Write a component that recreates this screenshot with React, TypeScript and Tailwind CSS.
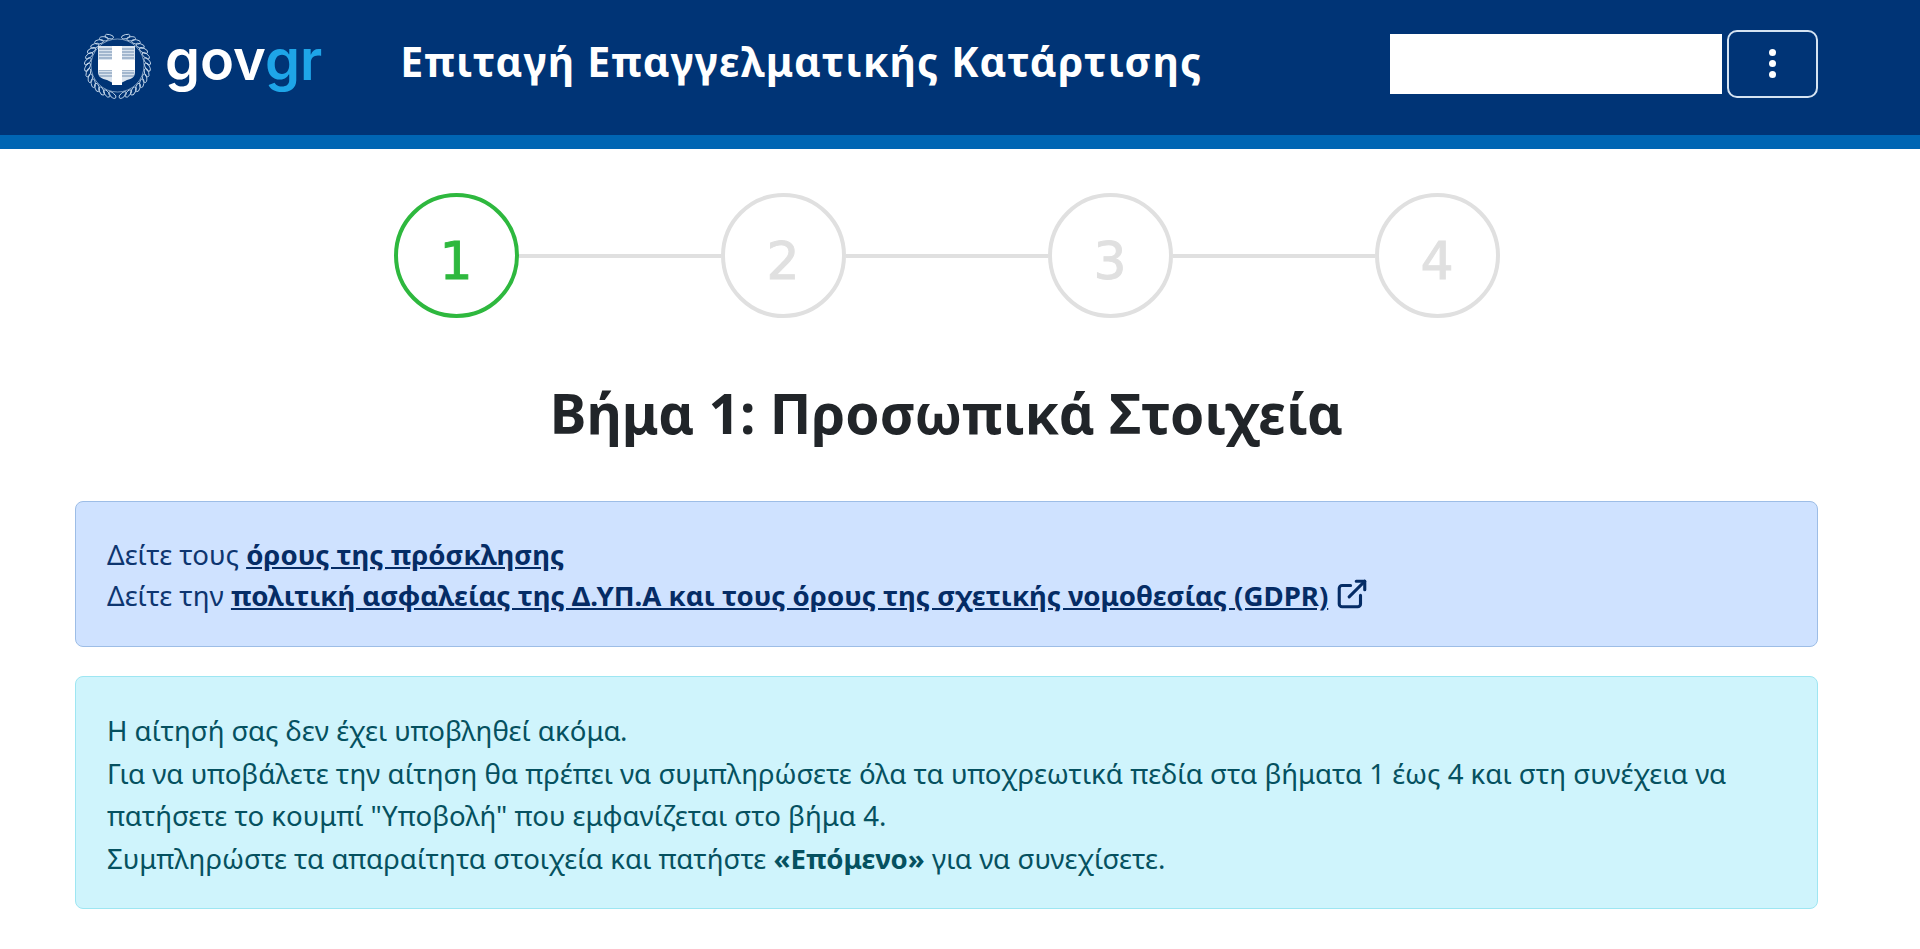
import { ExternalLink } from "lucide-react";

const bodyFont = { fontFamily: '"Noto Sans", "Open Sans", sans-serif' };
const steps = [1, 2, 3, 4];
const leaves = Array.from({ length: 30 }, (_, i) => i);

function Emblem() {
  return (
    <svg width="69" height="69" viewBox="0 0 69 69" className="shrink-0">
      <g fill="none" stroke="#c3d6ea" strokeWidth="0.9">
        {leaves.map((i) => {
          const side = i < 15 ? -1 : 1;
          const k = i % 15;
          const deg = 10 + k * 11;
          const a = (deg * Math.PI) / 180;
          const x = 34.5 + side * 30 * Math.sin(a);
          const y = 34.5 + 30 * Math.cos(a);
          return (
            <ellipse
              key={i}
              cx={x}
              cy={y}
              rx="2.1"
              ry="4.4"
              transform={`rotate(${side * (60 - deg)} ${x} ${y})`}
            />
          );
        })}
        <circle cx="34.5" cy="34.5" r="26.5" strokeWidth="0.6" />
      </g>
      <path d="M15 15h37v26c0 5-3 7-8 8l-10 5-10-5c-5-1-9-3-9-8z" fill="#d9e3ee" />
      <g stroke="#6f8cae" strokeWidth="1.2">
        {[18, 21, 24, 27, 30, 33, 36, 39, 42, 45].map((y) => (
          <line key={y} x1="16" x2="51" y1={y} y2={y} />
        ))}
      </g>
      <path d="M29 15h10v14h13v10H39v15h-10V39H15V29h14z" fill="#ffffff" />
    </svg>
  );
}

function Step({ n, active }: { n: number; active: boolean }) {
  return (
    <div
      className={`flex h-[125px] w-[125px] shrink-0 items-center justify-center rounded-full border-4 pt-[10px] text-[52px] leading-none [-webkit-text-stroke:1px_currentColor] ${
        active ? "border-[#2eb83e] text-[#2eb83e]" : "border-[#e0e0e0] text-[#e0e0e0]"
      }`}
      style={{ fontFamily: '"DejaVu Sans", sans-serif' }}
    >
      {n}
    </div>
  );
}

export default function App() {
  return (
    <div className="min-h-[949px] bg-white" style={bodyFont}>
      <header className="flex h-[149px] items-center border-b-[14px] border-[#0065b3] bg-[#003476] pb-[8px] pl-[83px] pr-[102px]">
        <div className="mt-[3px] flex items-center">
          <Emblem />
          <span
            className="mb-[10px] ml-[13px] text-[56px] font-semibold leading-none text-white"
            style={{ fontFamily: "Inter, sans-serif" }}
          >
            gov<span className="text-[#1ea5e8]">gr</span>
          </span>
        </div>
        <h1 className="mb-[4px] ml-[78px] text-[41px] font-bold tracking-[1.2px] text-white">
          Επιταγή Επαγγελματικής Κατάρτισης
        </h1>
        <div className="ml-auto flex items-center gap-[5px]">
          <div className="h-[60px] w-[332px] bg-white" />
          <button className="flex h-[68px] w-[91px] flex-col items-center justify-center gap-[4px] rounded-[10px] border-2 border-[#d5e3f2]">
            <span className="h-[7px] w-[7px] rounded-full bg-white" />
            <span className="h-[7px] w-[7px] rounded-full bg-white" />
            <span className="h-[7px] w-[7px] rounded-full bg-white" />
          </button>
        </div>
      </header>

      <main className="ml-[75px] w-[1743px]">
        <div className="mt-[44px] flex items-center justify-center">
          {steps.map((n) => (
            <div key={n} className="flex items-center">
              {n > 1 && <div className="h-[4px] w-[202px] bg-[#e0e0e0]" />}
              <Step n={n} active={n === 1} />
            </div>
          ))}
        </div>

        <h2 className="mt-[55px] text-center text-[55px] font-bold leading-[80px] text-[#212529]">
          Βήμα 1: Προσωπικά Στοιχεία
        </h2>

        <div className="mt-[48px] rounded-[8px] border border-[#9dbde6] bg-[#cfe2ff] px-[31px] pb-[30px] pt-[32px] text-[27.6px] leading-[41px] text-[#0d3570]">
          <div>
            Δείτε τους{" "}
            <a className="font-bold text-[#052c65] underline">όρους της πρόσκλησης</a>
          </div>
          <div>
            Δείτε την{" "}
            <a className="font-bold text-[#052c65] underline">
              πολιτική ασφαλείας της Δ.ΥΠ.Α και τους όρους της σχετικής νομοθεσίας (GDPR)
            </a>{" "}
            <ExternalLink className="inline-block h-[34px] w-[34px] align-[-5px] text-[#052c65]" strokeWidth={2.2} />
          </div>
        </div>

        <div className="mt-[29px] rounded-[8px] border border-[#9ee6f2] bg-[#cff4fc] px-[31px] pb-[29px] pt-[32px] text-[27.6px] leading-[42.5px] text-[#055160]">
          <div>Η αίτησή σας δεν έχει υποβληθεί ακόμα.</div>
          <div>
            Για να υποβάλετε την αίτηση θα πρέπει να συμπληρώσετε όλα τα υποχρεωτικά πεδία στα βήματα 1 έως 4 και στη συνέχεια να πατήσετε το κουμπί "Υποβολή" που εμφανίζεται στο βήμα 4.
          </div>
          <div>
            Συμπληρώστε τα απαραίτητα στοιχεία και πατήστε <b>«Επόμενο»</b> για να συνεχίσετε.
          </div>
        </div>
      </main>
    </div>
  );
}
